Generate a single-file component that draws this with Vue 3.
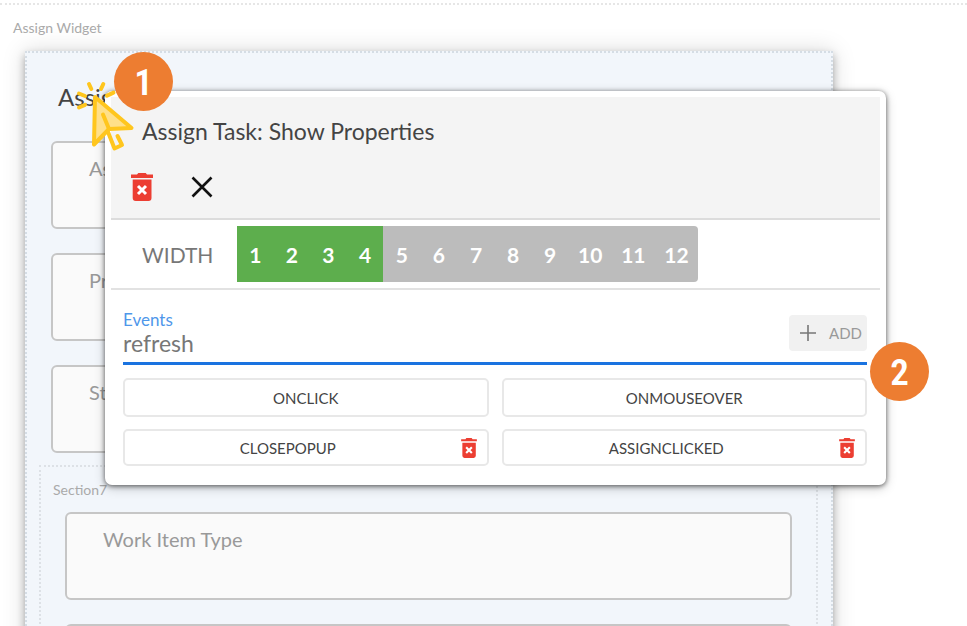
<script setup>
import { ref } from 'vue'

const fields = ['Assigned To', 'Priority', 'Status']
const sectionFields = ['Work Item Type', '']
const columns = Array.from({ length: 12 }, (_, i) => i + 1)
const width = ref(4)
const eventName = ref('refresh')
const events = ref([
  { name: 'ONCLICK', removable: false },
  { name: 'ONMOUSEOVER', removable: false },
  { name: 'CLOSEPOPUP', removable: true },
  { name: 'ASSIGNCLICKED', removable: true }
])

function removeEvent(name) {
  events.value = events.value.filter((e) => e.name !== name)
}
function addEvent() {
  events.value.push({ name: eventName.value.toUpperCase(), removable: true })
}
</script>

<template>
  <main class="page">
    <p class="caption">Assign Widget</p>
    <section class="widget">
      <h1 class="heading">Assign Task</h1>
      <div class="fields">
        <div v-for="f in fields" :key="f" class="field">{{ f }}</div>
      </div>
      <div class="section">
        <p class="section-name">Section7</p>
        <div class="fields nested">
          <div v-for="f in sectionFields" :key="f" class="field">{{ f }}</div>
        </div>
      </div>
    </section>

    <div class="popup" role="dialog" aria-labelledby="popup-title">
      <header class="popup-head">
        <h2 id="popup-title" class="popup-title">Assign Task: Show Properties</h2>
        <div class="actions">
          <button type="button" class="icon-btn" aria-label="Delete">
            <svg class="trash" viewBox="0 0 22 28">
              <path fill="#ec3e32" d="M0 1.600h6L7.300 0h7.400L16 1.600h6V5H0zM1.700 6.500h18.800V25a3 3 0 0 1-3 3H4.700a3 3 0 0 1-3-3z" />
              <path d="M7 13l8 8m0-8l-8 8" stroke="#fff" stroke-width="3" />
            </svg>
          </button>
          <button type="button" class="icon-btn" aria-label="Close">
            <svg class="close" viewBox="0 0 22 22">
              <path d="M1.500 1.500l19 19m0-19l-19 19" stroke="#111" stroke-width="2.600" />
            </svg>
          </button>
        </div>
      </header>

      <div class="width-row">
        <span class="width-label">WIDTH</span>
        <div class="cols" role="group" aria-label="Width">
          <button
            v-for="n in columns"
            :key="n"
            type="button"
            class="col"
            :class="{ on: n <= width }"
            @click="width = n"
          >{{ n }}</button>
        </div>
      </div>

      <div class="events">
        <div class="entry">
          <div class="entry-text">
            <label class="entry-label" for="event-name">Events</label>
            <input id="event-name" v-model="eventName" class="entry-input" type="text" />
          </div>
          <button type="button" class="add" @click="addEvent">
            <svg class="plus" viewBox="0 0 16 16">
              <path d="M8 0v16M0 8h16" stroke="#777" stroke-width="1.600" />
            </svg>
            ADD
          </button>
        </div>
        <div class="event-grid">
          <div v-for="e in events" :key="e.name" class="event" :class="{ removable: e.removable }">
            <button type="button" class="event-name">{{ e.name }}</button>
            <button
              v-if="e.removable"
              type="button"
              class="icon-btn"
              :aria-label="'Remove ' + e.name"
              @click="removeEvent(e.name)"
            >
              <svg class="trash small" viewBox="0 0 22 28">
                <path fill="#ec3e32" d="M0 1.600h6L7.300 0h7.400L16 1.600h6V4.600H0zM1.700 6.500h18.800V25a3 3 0 0 1-3 3H4.700a3 3 0 0 1-3-3z" />
                <path d="M7 13l8 8m0-8l-8 8" stroke="#fff" stroke-width="3" />
              </svg>
            </button>
          </div>
        </div>
      </div>
    </div>

    <svg class="pointer" viewBox="0 0 64 76" fill="none" stroke="#ffc61e" stroke-width="4" stroke-linecap="round" stroke-linejoin="round">
      <path fill="#ffe08a" d="M21 19L57.500 50L35 51L20 66.500z" />
      <path d="M29 36.500L35 51M34 54L40.500 70.500L48 67L43.500 58" />
      <path d="M15 6l2.300 5M29.300 6L27 11M33 17.600l6.500-3M5 15.500l6 2.500M5 29.500l6-2.600" />
    </svg>
    <span class="badge one">1</span>
    <span class="badge two">2</span>
  </main>
</template>

<style>
body {
  background: #fff;
}
</style>

<style scoped>
* {
  box-sizing: border-box;
}
.page {
  position: relative;
  height: 100vh;
  overflow: hidden;
  padding-top: 3px;
  font-family: Lato, "Open Sans", sans-serif;
  color: #444;
}
.page::before {
  content: "";
  display: block;
  border-top: 2px dotted #e6e6e6;
}
p, h1, h2 {
  margin: 0;
  font-weight: 400;
}
button {
  font: inherit;
  border: 0;
  padding: 0;
  background: none;
  cursor: pointer;
}
svg {
  display: block;
}
.caption {
  padding: 13px 13px 0;
  font-size: 14px;
  line-height: 20px;
  color: #aaa;
}
.widget {
  margin: 13px 134px 0 25px;
  border: 2px dotted #d5dde5;
  background: #f2f6fb;
  box-shadow: 0 4px 8px rgba(0, 0, 0, 0.3), 0 0 22px rgba(0, 0, 0, 0.15);
  padding: 28px 13px 0 12px;
}
.heading {
  padding-left: 19px;
  font-size: 24px;
  line-height: 32px;
}
.fields {
  display: flex;
  flex-direction: column;
  gap: 24px;
  padding: 28px 12px 12px;
}
.field {
  height: 88px;
  border: 2px solid #c6c6c6;
  border-radius: 6px;
  background: #fafafa;
  padding: 12px 36px;
  font-size: 20px;
  line-height: 26px;
  color: #999;
}
.section {
  border: 2px dotted #dde1e6;
  border-bottom: 0;
}
.section-name {
  padding: 13px 12px 0;
  font-size: 14px;
  line-height: 20px;
  color: #aaa;
}
.fields.nested {
  padding: 12px 24px;
}
.popup {
  position: absolute;
  top: 91px;
  left: 105px;
  right: 81px;
  padding: 6px;
  border-radius: 7px;
  background: #fff;
  box-shadow: 0 1px 5px rgba(0, 0, 0, 0.6), 0 3px 12px rgba(0, 0, 0, 0.2);
}
.popup-head {
  background: #f4f4f4;
  border-bottom: 2px solid #dcdcdc;
  padding: 19px 20px 17px;
}
.popup-title {
  padding-left: 11px;
  font-size: 23px;
  line-height: 30px;
}
.actions {
  display: flex;
  align-items: center;
  gap: 38px;
  padding-top: 27px;
}
.trash {
  width: 22px;
  height: 28px;
}
.trash.small {
  width: 16px;
  height: 20px;
}
.close {
  width: 22px;
  height: 22px;
}
.width-row {
  display: flex;
  align-items: center;
  border-bottom: 2px solid #e2e2e2;
  padding: 6px 0 6px 31px;
}
.width-label {
  width: 95px;
  font-size: 21px;
  color: #777;
}
.cols {
  display: grid;
  grid-template-columns: repeat(4, 73fr) repeat(5, 74fr) repeat(3, 86fr);
  width: 461px;
  height: 56px;
  border-radius: 0 4px 4px 0;
  overflow: hidden;
}
.col {
  background: #bcbcbc;
  color: #fff;
  font-size: 21px;
  font-weight: 700;
}
.col.on {
  background: #5dae4d;
}
.events {
  padding: 19px 13px 13px 12px;
}
.entry {
  display: flex;
  align-items: center;
  justify-content: space-between;
  border-bottom: 3px solid #1a73e0;
  height: 56px;
}
.entry-text {
  flex: 1;
  display: flex;
  flex-direction: column;
  padding-bottom: 7px;
}
.entry-label {
  font-size: 17px;
  line-height: 22px;
  color: #4f97ea;
}
.entry-input {
  width: 100%;
  border: 0;
  padding: 0;
  outline: 0;
  background: none;
  font: inherit;
  font-size: 23px;
  line-height: 24px;
  height: 24px;
  color: #777;
}
.add {
  display: flex;
  align-items: center;
  justify-content: space-between;
  width: 78px;
  height: 36px;
  margin-bottom: 6px;
  padding: 0 5px 0 11px;
  border-radius: 4px;
  background: #f1f1f1;
  color: #999;
  font-size: 15px;
}
.plus {
  width: 16px;
  height: 16px;
}
.event-grid {
  display: grid;
  grid-template-columns: 1fr 1fr;
  gap: 12px 13px;
  padding-top: 13px;
}
.event {
  display: flex;
  align-items: center;
  height: 39px;
  border: 2px solid #e8e8e8;
  border-radius: 5px;
}
.event.removable {
  height: 37px;
  padding-right: 10px;
}
.event-name {
  flex: 1;
  align-self: stretch;
  color: #444;
  font-size: 15px;
}
.removable .event-name {
  padding-right: 10px;
}
.pointer {
  position: absolute;
  left: 74px;
  top: 78px;
  width: 64px;
  height: 76px;
}
.badge {
  position: absolute;
  display: grid;
  place-items: center;
  width: 59px;
  height: 59px;
  border-radius: 50%;
  background: #ed7d31;
  color: #fff;
  font-family: "Roboto Condensed", Roboto, sans-serif;
  font-weight: 600;
  font-size: 37px;
  line-height: 62px;
}
.one {
  left: 114px;
  top: 52px;
}
.two {
  right: 38px;
  top: 342px;
}
</style>
